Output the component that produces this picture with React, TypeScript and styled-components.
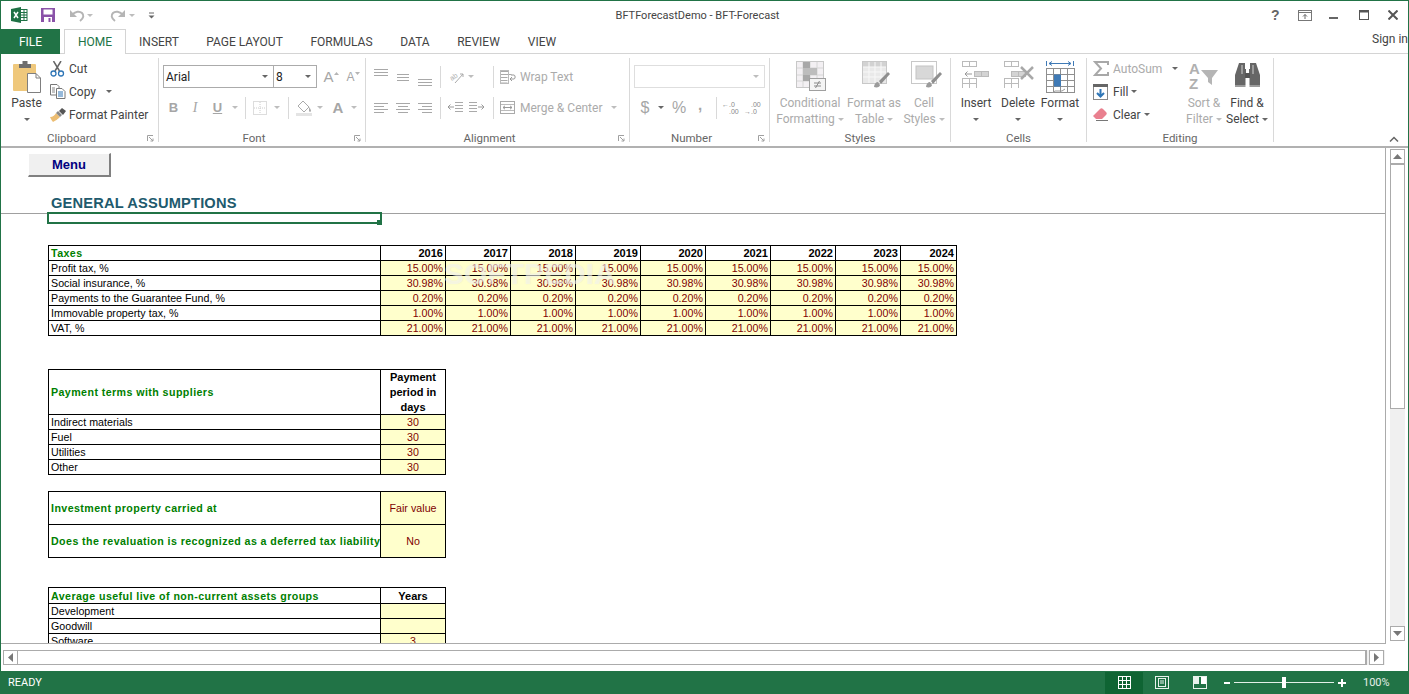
import React from 'react';
import styled, { createGlobalStyle } from 'styled-components';

const GREEN = '#217346';
const UI_FONT = 'Roboto, "Noto Sans", sans-serif';
const CELL_FONT = '"Liberation Sans", Arial, sans-serif';
const TEXT = '#444444';
const OFF = '#ababab';

const Global = createGlobalStyle`
  html, body { margin: 0; padding: 0; background: #fff; }
  * { box-sizing: border-box; }
`;

const Window = styled.div`
  width: 1409px;
  height: 694px;
  display: flex;
  flex-direction: column;
  overflow: hidden;
  background: #fff;
  border: 1px solid ${GREEN};
  border-bottom: 0;
  font-family: ${UI_FONT};
  font-size: 12px;
  color: ${TEXT};
`;

/* title bar */
const TitleBar = styled.div`
  height: 28px;
  flex: none;
  display: flex;
  align-items: center;
  position: relative;
`;
const Quick = styled.div`
  display: flex;
  align-items: center;
  padding-left: 10px;
`;
const QuickSlot = styled.div<{ $w: number }>`
  width: ${(p) => p.$w}px;
  display: flex;
  align-items: center;
  justify-content: center;
`;
const Title = styled.div`
  position: absolute;
  left: 0;
  right: 14px;
  top: 6px;
  text-align: center;
  font-size: 11px;
  line-height: 18px;
  color: #444;
`;
const WinControls = styled.div`
  margin-left: auto;
  display: flex;
  align-items: center;
  padding-right: 0;
`;
const WinSlot = styled.div`
  width: 29.5px;
  display: flex;
  justify-content: center;
  align-items: center;
`;
const Help = styled.span`
  font: bold 14px ${CELL_FONT};
  color: #666;
`;

/* tabs */
const TabRow = styled.div`
  height: 25px;
  flex: none;
  display: flex;
  align-items: stretch;
  border-bottom: 1px solid #d4d4d4;
`;
const FileTab = styled.div`
  width: 59px;
  height: 25px;
  background: ${GREEN};
  color: #fff;
  text-align: center;
  line-height: 26px;
  margin-right: 4px;
`;
const Tab = styled.div<{ $active?: boolean; $w: number }>`
  width: ${(p) => p.$w}px;
  height: ${(p) => (p.$active ? 25 : 24)}px;
  text-align: center;
  line-height: 26px;
  color: ${(p) => (p.$active ? GREEN : TEXT)};
  background: #fff;
  ${(p) => p.$active && 'border: 1px solid #d4d4d4; border-bottom: 0; line-height: 24px;'}
`;
const SignIn = styled.div`
  margin-left: auto;
  line-height: 20px;
  white-space: nowrap;
`;

/* ribbon */
const Ribbon = styled.div`
  height: 94px;
  flex: none;
  display: flex;
  padding-top: 4px;
  border-bottom: 2px solid #b1b1b1;
  position: relative;
`;
const Group = styled.div<{ $w: number }>`
  width: ${(p) => p.$w}px;
  height: 84px;
  flex: none;
  display: flex;
  flex-direction: column;
  border-right: 1px solid #d9d9d9;
  position: relative;
`;
const GroupBody = styled.div<{ $pad?: number }>`
  height: 72px;
  display: flex;
  padding-left: ${(p) => p.$pad ?? 4}px;
`;
const GroupLabel = styled.div<{ $launcher?: boolean }>`
  height: 12px;
  line-height: 16px;
  font-size: 11.5px;
  text-align: center;
  color: #666;
  padding-right: ${(p) => (p.$launcher ? 16 : 0)}px;
`;
const Launcher = styled.div`
  position: absolute;
  right: 4px;
  bottom: 0;
  display: flex;
`;
const Collapse = styled.div`
  position: absolute;
  right: 9px;
  bottom: 4px;
  display: flex;
`;
const Rows = styled.div`
  display: flex;
  flex-direction: column;
  padding-top: 7px;
  gap: 8px;
`;
const Row = styled.div`
  height: 23px;
  display: flex;
  align-items: center;
`;
const Slot = styled.div<{ $w: number; $off?: boolean }>`
  width: ${(p) => p.$w}px;
  flex: none;
  display: flex;
  align-items: center;
  justify-content: center;
  color: ${(p) => (p.$off ? OFF : TEXT)};
`;
const Sep = styled.div<{ $l: number; $r: number }>`
  width: 1px;
  height: 22px;
  flex: none;
  margin: 0 ${(p) => p.$r}px 0 ${(p) => p.$l}px;
  background: #d9d9d9;
`;
const Caret = styled.span<{ $off?: boolean; $ml?: number }>`
  display: inline-block;
  width: 0;
  height: 0;
  flex: none;
  vertical-align: middle;
  margin-left: ${(p) => p.$ml ?? 0}px;
  border-left: 3px solid transparent;
  border-right: 3px solid transparent;
  border-top: 3px solid ${(p) => (p.$off ? '#bdbdbd' : '#666')};
`;
const Combo = styled.div<{ $w: number; $off?: boolean; $flush?: boolean }>`
  width: ${(p) => p.$w}px;
  height: 23px;
  flex: none;
  display: flex;
  align-items: center;
  padding: 0 5px 0 2px;
  border: 1px solid ${(p) => (p.$off ? '#dedede' : '#ababab')};
  ${(p) => p.$flush && 'margin-left: -1px;'}
  color: #222;
  background: #fff;
`;
const ComboText = styled.span`
  flex: 1;
`;
const Large = styled.div<{ $w: number; $off?: boolean }>`
  width: ${(p) => p.$w}px;
  flex: none;
  display: flex;
  flex-direction: column;
  align-items: center;
  color: ${(p) => (p.$off ? OFF : TEXT)};
  line-height: 16px;
  white-space: nowrap;
`;
const LargeIcon = styled.div<{ $shift?: number }>`
  height: 37px;
  padding-top: 3px;
  padding-left: ${(p) => p.$shift ?? 0}px;
  display: flex;
  justify-content: center;
  align-items: flex-start;
`;
const CaretLine = styled.div`
  height: 16px;
  display: flex;
  align-items: center;
  justify-content: center;
`;
const SmallCol = styled.div<{ $w: number; $ml: number }>`
  width: ${(p) => p.$w}px;
  margin-left: ${(p) => p.$ml}px;
  margin-top: -1px;
  flex: none;
  display: flex;
  flex-direction: column;
`;
const Small = styled.div<{ $off?: boolean }>`
  height: 23px;
  display: flex;
  align-items: center;
  white-space: nowrap;
  color: ${(p) => (p.$off ? OFF : TEXT)};
`;
const SmallIcon = styled.div<{ $w?: number }>`
  width: ${(p) => p.$w ?? 19}px;
  flex: none;
  display: flex;
  align-items: center;
`;
const Glyph = styled.span<{ $size: number; $weight?: number; $italic?: boolean; $under?: boolean; $serif?: boolean; $lift?: number }>`
  font-family: ${(p) => (p.$serif ? '"Liberation Serif", serif' : CELL_FONT)};
  font-size: ${(p) => p.$size}px;
  font-weight: ${(p) => p.$weight ?? 400};
  font-style: ${(p) => (p.$italic ? 'italic' : 'normal')};
  text-decoration: ${(p) => (p.$under ? 'underline' : 'none')};
  padding-bottom: ${(p) => p.$lift ?? 0}px;
  color: #a6a6a6;
  line-height: 1;
`;

/* sheet */
const Middle = styled.div`
  height: 496px;
  flex: none;
  display: flex;
`;
const Pane = styled.div`
  width: 1385px;
  flex: none;
  overflow: hidden;
  position: relative;
  border-right: 1px solid #ababab;
  border-bottom: 1px solid #ababab;
  font-family: ${CELL_FONT};
  font-size: 10.67px;
  color: #000;
`;
const MenuButton = styled.div`
  width: 83px;
  height: 24px;
  margin: 5px 0 0 27px;
  background: #f0f0f0;
  border: 1px solid;
  border-color: #fff #808080 #808080 #fff;
  border-width: 1px 2px 2px 1px;
  text-align: center;
  font: bold 13px/21px ${CELL_FONT};
  color: #000080;
`;
const Heading = styled.div`
  height: 37px;
  padding: 18px 0 0 50px;
  border-bottom: 1px solid #a0a0a0;
  font: bold 14.67px/16px ${CELL_FONT};
  letter-spacing: 0.17px;
  color: #215a6d;
  position: relative;
`;
const Selection = styled.div`
  position: absolute;
  left: 46px;
  top: 35px;
  width: 335px;
  height: 12px;
  border: 2px solid ${GREEN};
`;
const Handle = styled.div`
  position: absolute;
  right: -2px;
  bottom: -3px;
  width: 5px;
  height: 5px;
  background: ${GREEN};
`;
const Table = styled.div<{ $cols: string; $top: number }>`
  display: grid;
  width: max-content;
  grid-template-columns: ${(p) => p.$cols};
  margin: ${(p) => p.$top}px 0 0 47px;
  border-top: 1px solid #000;
  border-left: 1px solid #000;
`;
const Cell = styled.div<{
  $h?: number;
  $align?: string;
  $kind?: 'title' | 'head' | 'input' | 'label';
}>`
  height: ${(p) => p.$h ?? 15}px;
  display: flex;
  align-items: center;
  justify-content: ${(p) =>
    p.$align === 'right' ? 'flex-end' : p.$align === 'center' ? 'center' : 'flex-start'};
  text-align: ${(p) => p.$align ?? 'left'};
  padding: 1px 2px 0 2px;
  line-height: 15px;
  white-space: nowrap;
  border-right: 1px solid #000;
  border-bottom: 1px solid #000;
  letter-spacing: ${(p) => (p.$kind === 'title' ? '0.42px' : '0.03px')};
  font-size: ${(p) => (p.$kind === 'head' ? '11px' : 'inherit')};
  background: ${(p) => (p.$kind === 'input' ? '#ffffcc' : '#fff')};
  color: ${(p) =>
    p.$kind === 'input' ? '#800000' : p.$kind === 'title' ? '#008000' : '#000'};
  font-weight: ${(p) => (p.$kind === 'title' || p.$kind === 'head' ? 700 : 400)};
`;
const Wrapped = styled.span`
  white-space: normal;
  width: 62px;
  text-align: center;
`;
const Watermark = styled.div`
  position: absolute;
  left: 443px;
  top: 109px;
  font: bold 30px/34px ${CELL_FONT};
  color: rgba(255, 255, 255, 0.5);
  text-shadow: 0 0 1px rgba(180, 180, 160, 0.25);
  pointer-events: none;
`;

/* scrollbars */
const VScroll = styled.div`
  width: 22px;
  flex: none;
  padding: 1px 3px 3px 4px;
  display: flex;
  flex-direction: column;
`;
const VTrack = styled.div`
  flex: 1;
  display: flex;
  flex-direction: column;
  background: #f0f0f0;
`;
const VThumb = styled.div`
  height: 246px;
  margin-top: -1px;
  background: #fff;
  border: 1px solid #ababab;
  border-top-width: 2px;
`;
const ScrollBtn = styled.div`
  width: 15px;
  height: 15px;
  flex: none;
  display: flex;
  align-items: center;
  justify-content: center;
  background: #fff;
  border: 1px solid #ababab;
`;
const HRow = styled.div`
  height: 27px;
  flex: none;
  padding: 6px 0 0 2px;
`;
const HBar = styled.div`
  width: 1382px;
  height: 15px;
  display: flex;
  background: #f0f0f0;
`;
const HThumb = styled.div`
  width: 1350px;
  height: 15px;
  background: #fff;
  border: 1px solid #ababab;
  border-right-width: 2px;
  margin: 0 2px 0 -1px;
`;

/* status bar */
const Status = styled.div`
  height: 23px;
  flex: none;
  margin: 0 -1px;
  display: flex;
  align-items: center;
  background: ${GREEN};
  color: #fff;
  font-size: 11px;
  padding-left: 8px;
`;
const StatusRight = styled.div`
  margin-left: auto;
  height: 100%;
  display: flex;
  align-items: center;
`;
const ViewBtn = styled.div<{ $active?: boolean }>`
  width: 38px;
  height: 22px;
  display: flex;
  align-items: center;
  justify-content: center;
  background: ${(p) => (p.$active ? '#0f6433' : 'transparent')};
`;
const Zoom = styled.div<{ $w: number }>`
  width: ${(p) => p.$w}px;
  height: 22px;
  display: flex;
  align-items: center;
  justify-content: center;
`;
const Slider = styled.div`
  width: 100px;
  height: 1px;
  background: #e4f0e9;
  position: relative;
`;
const SliderThumb = styled.div`
  position: absolute;
  left: 48px;
  top: -5px;
  width: 4px;
  height: 11px;
  background: #fff;
`;
const Percent = styled.div`
  width: 59px;
  padding: 0 0 1px 13px;
  color: #e6efe9;
`;

/* icons, drawn at their pixel size */
const Svg: React.FC<{ w: number; h: number; children: React.ReactNode }> = ({ w, h, children }) => (
  <svg width={w} height={h} viewBox={`0 0 ${w} ${h}`} fill="none" style={{ display: 'block', flex: 'none' }}>
    {children}
  </svg>
);

const ExcelLogo = () => (
  <Svg w={17} h={16}>
    <rect x="9.5" y="2.5" width="6.5" height="11" fill="#fff" stroke="#1e7145" />
    <path d="M10 5.5h6M10 8h6M10 10.5h6M13 3v10" stroke="#1e7145" />
    <path d="M0 2 10 0v16L0 14z" fill="#1e7145" />
    <path d="M3 5l4 6M7 5l-4 6" stroke="#fff" strokeWidth="1.5" />
  </Svg>
);
const SaveIcon = () => (
  <Svg w={14} h={14}>
    <rect width="14" height="14" fill="#8a52a8" />
    <rect x="2.5" y="1.5" width="9" height="5" fill="#fff" />
    <rect x="3" y="9" width="8" height="5" fill="#fff" />
    <rect x="7.5" y="10" width="2" height="4" fill="#8a52a8" />
  </Svg>
);
const UndoIcon = ({ flip }: { flip?: boolean }) => (
  <Svg w={15} h={13}>
    <g transform={flip ? 'translate(15 0) scale(-1 1)' : undefined}>
      <path d="M2 6c3-4 8-4 10-2s2 5-2 8" stroke="#b5b5b5" strokeWidth="2" />
      <path d="M0 1v7h7z" fill="#b5b5b5" />
    </g>
  </Svg>
);
const QatMore = () => (
  <Svg w={7} h={7}>
    <path d="M1 1h5" stroke="#666" />
    <path d="M.5 3.5h6L3.5 6.5z" fill="#666" />
  </Svg>
);
const RibbonDisplay = () => (
  <Svg w={14} h={11}>
    <rect x=".5" y=".5" width="13" height="10" stroke="#777" />
    <path d="M1 2.5h12" stroke="#777" />
    <path d="M7 9V4.5M5 6.5l2-2 2 2" stroke="#666" />
  </Svg>
);
const MinIcon = () => (
  <Svg w={10} h={10}>
    <rect y="7" width="9" height="2" fill="#666" />
  </Svg>
);
const MaxIcon = () => (
  <Svg w={10} h={10}>
    <rect x=".5" y=".5" width="9" height="9" stroke="#555" />
    <path d="M0 1.5h10" stroke="#555" strokeWidth="2" />
  </Svg>
);
const CloseIcon = () => (
  <Svg w={10} h={10}>
    <path d="M.5.5l9 9M9.5.5l-9 9" stroke="#555" strokeWidth="2" />
  </Svg>
);
const LauncherIcon = () => (
  <Svg w={7} h={7}>
    <path d="M.5 6V.5H6" stroke="#a0a0a0" />
    <path d="M2 2l4 4M6 3.5V6H3.5" stroke="#a0a0a0" />
  </Svg>
);
const PasteIcon = () => (
  <Svg w={30} h={32}>
    <rect x="1" y="3" width="23" height="27" rx="1" fill="#efc87c" />
    <rect x="7" y="3" width="12" height="4" fill="#6e6e6e" />
    <rect x="10.5" y="0" width="5" height="4" fill="#6e6e6e" />
    <path d="M15.5 12.5H24l4.5 4.5v14.500H15.500z" fill="#fff" stroke="#7f7f7f" />
    <path d="M24 12.500V17h4.500" stroke="#7f7f7f" />
  </Svg>
);
const CutIcon = () => (
  <Svg w={15} h={16}>
    <path d="M3.500 0l6 10M11 0L5 10" stroke="#666" strokeWidth="1.500" />
    <circle cx="3.500" cy="12.500" r="2.500" stroke="#2e75b6" strokeWidth="1.300" />
    <circle cx="11" cy="12.500" r="2.500" stroke="#2e75b6" strokeWidth="1.300" />
  </Svg>
);
const CopyIcon = () => (
  <Svg w={16} h={15}>
    <path d="M.5.5H7l2 2V11H.5z" fill="#fff" stroke="#777" />
    <path d="M6.500 4.500H12l3 3v7H6.500z" fill="#fff" stroke="#777" />
    <path d="M2 4h3M2 6h3M2 8h3" stroke="#888" />
    <path d="M8 8h5M8 10h5M8 12h5" stroke="#2e75b6" />
  </Svg>
);
const PainterIcon = () => (
  <Svg w={16} h={14}>
    <path d="M0 9c3 0 5-2 6-4l4 4c-2 2-5 4-7 5-1-1-2-3-3-5z" fill="#ecbd72" />
    <path d="M6 5l2-2 4 4-2 2z" fill="#888" />
    <path d="M9 3l3-3 4 3-3 4z" fill="#555" />
  </Svg>
);
const SizeA = ({ up, size }: { up?: boolean; size: number }) => (
  <Slot $w={22} $off>
    <Glyph $size={size}>A</Glyph>
    <Svg w={5} h={9}>
      <path d={up ? 'M0 3l2.500-3L5 3z' : 'M0 0l2.500 3L5 0z'} fill="#b5b5b5" />
    </Svg>
  </Slot>
);
const BordersIcon = () => (
  <Svg w={14} h={14}>
    <rect x=".5" y=".5" width="13" height="13" stroke="#bbb" strokeDasharray="1 1" />
    <path d="M7 1v12M1 7h12" stroke="#ccc" strokeDasharray="1 1" />
  </Svg>
);
const BucketIcon = () => (
  <Svg w={16} h={16}>
    <path d="M7 1l6 6-5 5-6-6z" fill="#fff" stroke="#aaa" />
    <path d="M13 7c1 1 2 3 2 4s-2 1-2 0z" fill="#aaa" />
    <rect y="13" width="16" height="3" fill="#e4e4e4" />
  </Svg>
);
const Lines = ({ rows, h = 14 }: { rows: [number, number, number][]; h?: number }) => (
  <Svg w={15} h={h}>
    {rows.map(([a, b, y]) => (
      <path key={y} d={`M${a} ${y + 0.5}H${b}`} stroke="#a8a8a8" />
    ))}
  </Svg>
);
const OrientIcon = () => (
  <Svg w={16} h={15}>
    <text x="2" y="10" fontSize="7" fontFamily={CELL_FONT} fill="#aaa" transform="rotate(-35 6 8)">ab</text>
    <path d="M7 14L15 5M15 5h-3M15 5v3" stroke="#aaa" />
  </Svg>
);
const IndentIcon = ({ out }: { out?: boolean }) => (
  <Svg w={16} h={11}>
    <g transform={out ? undefined : 'translate(16 0) scale(-1 1)'}>
      <path d="M8 .5h8M8 3.500h8M8 6.500h8M8 9.500h8" stroke="#aaa" />
      <path d="M7 5H1M3.500 2.500L1 5l2.500 2.500" stroke="#999" />
    </g>
  </Svg>
);
const WrapIcon = () => (
  <Svg w={16} h={14}>
    <path d="M.5 1.500h8M.5 4.500h11M.5 7.500h7M.5 10.500h7M.5 13h7" stroke="#aaa" />
    <rect x=".5" y=".5" width="8" height="13" stroke="#bbb" />
    <path d="M11 5h3c1.500 0 1.500 4 0 4h-4M12 7l-2 2 2 2" stroke="#999" />
  </Svg>
);
const MergeIcon = () => (
  <Svg w={15} h={13}>
    <rect x=".5" y=".5" width="14" height="12" stroke="#aaa" />
    <path d="M1 3.500h13M1 9.500h13" stroke="#bbb" />
    <path d="M3 6.500h9M5 4.800L3 6.500l2 1.700M10 4.800l2 1.700-2 1.700" stroke="#999" />
  </Svg>
);
const DecimalIcon = ({ more }: { more?: boolean }) => (
  <Svg w={18} h={14}>
    <text x={more ? 0 : 7} y="6" fontSize="7" fontFamily={CELL_FONT} fill="#888">{more ? '←.0' : '.00'}</text>
    <text x={more ? 7 : 0} y="13" fontSize="7" fontFamily={CELL_FONT} fill="#888">{more ? '.00' : '→.0'}</text>
  </Svg>
);
const CondIcon = () => (
  <Svg w={31} h={30}>
    <rect x=".5" y=".5" width="27" height="26" fill="#f3f0f3" stroke="#c8c8c8" />
    <path d="M7 1v25M14 1v25M21 1v25M1 7h26M1 14h26M1 20h26" stroke="#d6d6d6" />
    <rect x="7" y="1" width="7" height="6" fill="#a8a8a8" />
    <rect x="7" y="7" width="14" height="7" fill="#bdbdbd" />
    <rect x="7" y="14" width="7" height="6" fill="#a8a8a8" />
    <rect x="13.500" y="17.500" width="16" height="12" fill="#f4f4f4" stroke="#9f9f9f" />
    <path d="M18 22h7M18 25h7M23.500 20l-4 7" stroke="#8a8a8a" />
  </Svg>
);
const Brush = ({ x, y }: { x: number; y: number }) => (
  <g transform={`translate(${x} ${y})`}>
    <path d="M0 15c0-3 2-5 4-5l2 3c0 2-3 3-6 2z" fill="#9b9b9b" />
    <path d="M5 9L14 0l2 2-9 10z" fill="#8f8f8f" />
  </g>
);
const TableStyleIcon = () => (
  <Svg w={30} h={30}>
    <rect x=".5" y=".5" width="24" height="22" fill="#e9e9e9" stroke="#c8c8c8" />
    <rect x="1" y="1" width="23" height="5" fill="#d2d2d2" />
    <path d="M7 1v21M13 1v21M19 1v21M1 6h23M1 11h23M1 16h23" stroke="#f8f8f8" />
    <Brush x={12} y={11} />
  </Svg>
);
const CellStyleIcon = () => (
  <Svg w={34} h={30}>
    <rect x=".5" y=".5" width="25" height="22" fill="#fff" stroke="#c8c8c8" />
    <rect x="5" y="5" width="17" height="13" fill="#d8d8d8" stroke="#c4c4c4" />
    <Brush x={15} y={11} />
  </Svg>
);
const Cells = ({ x, y, c = 2, r = 2, w = 7, h = 5, color = '#bbb', fill = '#fff' }: { x: number; y: number; c?: number; r?: number; w?: number; h?: number; color?: string; fill?: string }) => (
  <g>
    {Array.from({ length: c * r }, (_, i) => (
      <rect
        key={i}
        x={x + 0.5 + (i % c) * w}
        y={y + 0.5 + Math.floor(i / c) * h}
        width={w}
        height={h}
        fill={fill}
        stroke={color}
      />
    ))}
  </g>
);
const InsertIcon = () => (
  <Svg w={28} h={27}>
    <Cells x={0} y={0} r={1} />
    <Cells x={12} y={10} r={1} fill="#d4d4d4" />
    <path d="M10 13H3M5.500 10.500L3 13l2.500 2.500" stroke="#999" />
    <Cells x={0} y={17} />
  </Svg>
);
const DeleteIcon = () => (
  <Svg w={32} h={27}>
    <Cells x={0} y={0} r={1} />
    <Cells x={7} y={10} r={1} fill="#d4d4d4" />
    <path d="M17 6l12 12M29 6L17 18" stroke="#a8a8a8" strokeWidth="2.500" />
    <Cells x={0} y={17} />
  </Svg>
);
const FormatIcon = () => (
  <Svg w={29} h={32}>
    <path d="M.5 0v5M27.500 0v5M3 2.500h22M6 .5l-3 2 3 2M22 .5l3 2-3 2" stroke="#3f7ab6" />
    <Cells x={0} y={7} c={4} r={4} w={7} h={6} color="#8f8f8f" />
    <rect x="8" y="13.500" width="7" height="12" fill="#3f7ab6" />
    <path d="M6 32l3-2h7l3-2" stroke="#999" />
  </Svg>
);
const SigmaIcon = () => (
  <Svg w={16} h={15}>
    <path d="M15 4V1H2l6 6.500L2 14h13v-3" stroke="#a8a8a8" strokeWidth="2" />
  </Svg>
);
const FillIcon = () => (
  <Svg w={15} h={16}>
    <rect x=".5" y=".5" width="14" height="15" fill="#fff" stroke="#888" />
    <rect width="15" height="3" fill="#666" />
    <path d="M7.500 5v7M4 9l3.500 3.500L11 9" stroke="#2e75b6" strokeWidth="2" />
  </Svg>
);
const EraserIcon = () => (
  <Svg w={15} h={13}>
    <path d="M0 8l7-7c1-1 2-1 3 0l3 3c1 1 1 2 0 3l-4 4H3z" fill="#e9808f" />
    <path d="M3 12.500h12" stroke="#777" />
  </Svg>
);
const SortIcon = () => (
  <Svg w={30} h={30}>
    <text x="0" y="13" fontSize="15" fontWeight="700" fontFamily={CELL_FONT} fill="#b0b0b0">A</text>
    <text x="0" y="28" fontSize="15" fontWeight="700" fontFamily={CELL_FONT} fill="#b0b0b0">Z</text>
    <path d="M12 9h17l-6 8v7l-4-3v-4z" fill="#b5b5b5" />
  </Svg>
);
const BinocularsIcon = () => (
  <Svg w={27} h={27}>
    <path d="M4 1h6v6h1v5h-.5v13H0V13z" fill="#666" transform="translate(1 1)" />
    <path d="M22 1h-6v6h-1v5h.5v13H26V13z" fill="#666" transform="translate(0 1)" />
    <rect x="11" y="12" width="5" height="5" fill="#555" />
    <path d="M1 25h11M15 25h11M8 4v9M19 4v9" stroke="#fff" strokeOpacity="0.7" />
  </Svg>
);
const Up = () => (
  <Svg w={9} h={5}>
    <path d="M0 5l4.500-5L9 5z" fill="#777" />
  </Svg>
);
const Down = () => (
  <Svg w={9} h={5}>
    <path d="M0 0l4.500 5L9 0z" fill="#777" />
  </Svg>
);
const Left = () => (
  <Svg w={5} h={9}>
    <path d="M5 0L0 4.500 5 9z" fill="#777" />
  </Svg>
);
const Right = () => (
  <Svg w={5} h={9}>
    <path d="M0 0l5 4.500L0 9z" fill="#777" />
  </Svg>
);
const Chevron = () => (
  <Svg w={10} h={6}>
    <path d="M1 5.500l4-4 4 4" stroke="#666" strokeWidth="1.500" />
  </Svg>
);
const GridView = () => (
  <Svg w={13} h={13}>
    <path d="M.5 0v13M4.500 0v13M8.500 0v13M12.500 0v13M0 .5h13M0 4.500h13M0 8.500h13M0 12.500h13" stroke="#fff" />
  </Svg>
);
const PageView = () => (
  <Svg w={14} h={13}>
    <rect x=".5" y=".5" width="13" height="12" stroke="#e8f2ec" />
    <rect x="3.500" y="2.500" width="7" height="8" stroke="#e8f2ec" />
    <path d="M5 5h4M5 7h4" stroke="#e8f2ec" />
  </Svg>
);
const BreakView = () => (
  <Svg w={14} h={13}>
    <rect x=".5" y=".5" width="13" height="12" stroke="#e8f2ec" />
    <rect x="1" y="1" width="5" height="7" fill="#e8f2ec" />
    <rect x="8" y="1" width="5" height="7" fill="#fff" />
  </Svg>
);
const ZoomOut = () => (
  <Svg w={6} h={2}>
    <rect width="6" height="2" fill="#fff" />
  </Svg>
);
const ZoomIn = () => (
  <Svg w={8} h={8}>
    <path d="M0 4h8M4 0v8" stroke="#fff" strokeWidth="2" />
  </Svg>
);

const Drop = ({ off }: { off?: boolean }) => <Caret $off={off} />;
const LargeDrop = ({ off }: { off?: boolean }) => (
  <CaretLine>
    <Caret $off={off} />
  </CaretLine>
);

const tabs: [string, number][] = [
  ['INSERT', 66],
  ['PAGE LAYOUT', 105],
  ['FORMULAS', 89],
  ['DATA', 58],
  ['REVIEW', 69],
  ['VIEW', 58],
];

const years = [2016, 2017, 2018, 2019, 2020, 2021, 2022, 2023, 2024];
const taxes: [string, string][] = [
  ['Profit tax, %', '15.00%'],
  ['Social insurance, %', '30.98%'],
  ['Payments to the Guarantee Fund, %', '0.20%'],
  ['Immovable property tax, %', '1.00%'],
  ['VAT, %', '21.00%'],
];
const suppliers = ['Indirect materials', 'Fuel', 'Utilities', 'Other'];

const GroupFoot = ({ label, launcher }: { label: string; launcher?: boolean }) => (
  <>
    <GroupLabel $launcher={launcher}>{label}</GroupLabel>
    {launcher && (
      <Launcher>
        <LauncherIcon />
      </Launcher>
    )}
  </>
);

const App: React.FC = () => (
  <Window>
    <Global />
    <TitleBar>
      <Quick>
        <ExcelLogo />
        <QuickSlot $w={40}><SaveIcon /></QuickSlot>
        <QuickSlot $w={19}><UndoIcon /></QuickSlot>
        <QuickSlot $w={6}><Caret $off /></QuickSlot>
        <QuickSlot $w={17} />
        <QuickSlot $w={15}><UndoIcon flip /></QuickSlot>
        <QuickSlot $w={14}><Caret $off /></QuickSlot>
        <QuickSlot $w={24}><QatMore /></QuickSlot>
      </Quick>
      <Title>BFTForecastDemo - BFT-Forecast</Title>
      <WinControls>
        <WinSlot><Help>?</Help></WinSlot>
        <WinSlot><RibbonDisplay /></WinSlot>
        <WinSlot><MinIcon /></WinSlot>
        <WinSlot><MaxIcon /></WinSlot>
        <WinSlot><CloseIcon /></WinSlot>
      </WinControls>
    </TitleBar>

    <TabRow>
      <FileTab>FILE</FileTab>
      <Tab $active $w={62}>HOME</Tab>
      {tabs.map(([name, w]) => (
        <Tab key={name} $w={w}>{name}</Tab>
      ))}
      <SignIn>Sign in</SignIn>
    </TabRow>

    <Ribbon>
      <Group $w={158}>
        <GroupBody $pad={7}>
          <Large $w={37}>
            <LargeIcon><PasteIcon /></LargeIcon>
            Paste
            <LargeDrop />
          </Large>
          <SmallCol $w={105} $ml={5}>
            <Small><SmallIcon><CutIcon /></SmallIcon>Cut</Small>
            <Small><SmallIcon><CopyIcon /></SmallIcon>Copy<Caret $ml={10} /></Small>
            <Small><SmallIcon><PainterIcon /></SmallIcon>Format Painter</Small>
          </SmallCol>
        </GroupBody>
        <GroupFoot label="Clipboard" launcher />
      </Group>

      <Group $w={207}>
        <GroupBody>
          <Rows>
            <Row>
              <Combo $w={111}><ComboText>Arial</ComboText><Drop /></Combo>
              <Combo $w={44} $flush><ComboText>8</ComboText><Drop /></Combo>
              <Slot $w={3} />
              <SizeA up size={15} />
              <SizeA size={12} />
            </Row>
            <Row>
              <Slot $w={21}><Glyph $size={13} $weight={700}>B</Glyph></Slot>
              <Slot $w={22}><Glyph $size={14} $italic $serif>I</Glyph></Slot>
              <Slot $w={23}><Glyph $size={13} $weight={700} $under>U</Glyph></Slot>
              <Slot $w={11}><Drop off /></Slot>
              <Sep $l={5} $r={5} />
              <Slot $w={18}><BordersIcon /></Slot>
              <Slot $w={16}><Drop off /></Slot>
              <Sep $l={3} $r={5} />
              <Slot $w={20}><BucketIcon /></Slot>
              <Slot $w={12}><Drop off /></Slot>
              <Slot $w={24}><Glyph $size={15} $weight={700}>A</Glyph></Slot>
              <Slot $w={8}><Drop off /></Slot>
            </Row>
          </Rows>
        </GroupBody>
        <GroupFoot label="Font" launcher />
      </Group>

      <Group $w={264}>
        <GroupBody>
          <Rows>
            <Row>
              <Slot $w={22}><Lines h={20} rows={[[0, 14, 2], [0, 14, 5], [0, 14, 8]]} /></Slot>
              <Slot $w={22}><Lines h={20} rows={[[1, 13, 7], [1, 13, 10], [1, 13, 13]]} /></Slot>
              <Slot $w={22}><Lines h={20} rows={[[0, 14, 12], [0, 14, 15], [0, 14, 18]]} /></Slot>
              <Sep $l={4} $r={4} />
              <Slot $w={22}><OrientIcon /></Slot>
              <Slot $w={8}><Drop off /></Slot>
              <Sep $l={18} $r={6} />
              <Small $off><SmallIcon $w={20}><WrapIcon /></SmallIcon>Wrap Text</Small>
            </Row>
            <Row>
              <Slot $w={22}><Lines rows={[[0, 14, 2], [0, 10, 5], [0, 14, 8], [0, 10, 11]]} /></Slot>
              <Slot $w={22}><Lines rows={[[0, 14, 2], [2, 12, 5], [0, 14, 8], [2, 12, 11]]} /></Slot>
              <Slot $w={22}><Lines rows={[[0, 14, 2], [4, 14, 5], [0, 14, 8], [4, 14, 11]]} /></Slot>
              <Sep $l={4} $r={4} />
              <Slot $w={20}><IndentIcon out /></Slot>
              <Slot $w={24}><IndentIcon /></Slot>
              <Sep $l={4} $r={6} />
              <Small $off><SmallIcon $w={20}><MergeIcon /></SmallIcon>Merge &amp; Center<Caret $off $ml={9} /></Small>
            </Row>
          </Rows>
        </GroupBody>
        <GroupFoot label="Alignment" launcher />
      </Group>

      <Group $w={140}>
        <GroupBody>
          <Rows>
            <Row>
              <Combo $w={131} $off><ComboText /><Drop off /></Combo>
            </Row>
            <Row>
              <Slot $w={22}><Glyph $size={16}>$</Glyph></Slot>
              <Slot $w={10}><Drop /></Slot>
              <Slot $w={26}><Glyph $size={16}>%</Glyph></Slot>
              <Slot $w={16}><Glyph $size={15} $weight={700} $lift={7}>,</Glyph></Slot>
              <Sep $l={8} $r={4} />
              <Slot $w={20}><DecimalIcon more /></Slot>
              <Slot $w={24}><DecimalIcon /></Slot>
            </Row>
          </Rows>
        </GroupBody>
        <GroupFoot label="Number" launcher />
      </Group>

      <Group $w={181}>
        <GroupBody>
          <Large $w={72} $off>
            <LargeIcon $shift={3}><CondIcon /></LargeIcon>
            Conditional
            <div>Formatting <Caret $off /></div>
          </Large>
          <Large $w={56} $off>
            <LargeIcon $shift={6}><TableStyleIcon /></LargeIcon>
            Format as
            <div>Table <Caret $off /></div>
          </Large>
          <Large $w={44} $off>
            <LargeIcon $shift={8}><CellStyleIcon /></LargeIcon>
            Cell
            <div>Styles <Caret $off /></div>
          </Large>
        </GroupBody>
        <GroupFoot label="Styles" />
      </Group>

      <Group $w={136}>
        <GroupBody>
          <Large $w={42}>
            <LargeIcon><InsertIcon /></LargeIcon>
            Insert
            <LargeDrop />
          </Large>
          <Large $w={42}>
            <LargeIcon $shift={3}><DeleteIcon /></LargeIcon>
            Delete
            <LargeDrop />
          </Large>
          <Large $w={42}>
            <LargeIcon><FormatIcon /></LargeIcon>
            Format
            <LargeDrop />
          </Large>
        </GroupBody>
        <GroupFoot label="Cells" />
      </Group>

      <Group $w={187}>
        <GroupBody $pad={6}>
          <SmallCol $w={93} $ml={0}>
            <Small $off><SmallIcon $w={20}><SigmaIcon /></SmallIcon>AutoSum<Caret $ml={10} /></Small>
            <Small><SmallIcon $w={20}><FillIcon /></SmallIcon>Fill<Caret $ml={3} /></Small>
            <Small><SmallIcon $w={20}><EraserIcon /></SmallIcon>Clear<Caret $ml={3} /></Small>
          </SmallCol>
          <Large $w={36} $off>
            <LargeIcon><SortIcon /></LargeIcon>
            Sort &amp;
            <div>Filter <Caret $off /></div>
          </Large>
          <Large $w={50}>
            <LargeIcon><BinocularsIcon /></LargeIcon>
            Find &amp;
            <div>Select <Caret /></div>
          </Large>
        </GroupBody>
        <GroupFoot label="Editing" />
      </Group>

      <Collapse><Chevron /></Collapse>
    </Ribbon>

    <Middle>
      <Pane>
        <MenuButton>Menu</MenuButton>
        <Heading>
          GENERAL ASSUMPTIONS
          <Selection><Handle /></Selection>
        </Heading>

        <Table $cols={`332px repeat(8, 65px) 56px`} $top={31}>
          <Cell $kind="title">Taxes</Cell>
          {years.map((y) => (
            <Cell key={y} $kind="head" $align="right">{y}</Cell>
          ))}
          {taxes.map(([name, value]) => (
            <React.Fragment key={name}>
              <Cell>{name}</Cell>
              {years.map((y) => (
                <Cell key={y} $kind="input" $align="right">{value}</Cell>
              ))}
            </React.Fragment>
          ))}
        </Table>

        <Table $cols="332px 65px" $top={33}>
          <Cell $kind="title" $h={45}>Payment terms with suppliers</Cell>
          <Cell $kind="head" $h={45} $align="center"><Wrapped>Payment period in days</Wrapped></Cell>
          {suppliers.map((name) => (
            <React.Fragment key={name}>
              <Cell>{name}</Cell>
              <Cell $kind="input" $align="center">30</Cell>
            </React.Fragment>
          ))}
        </Table>

        <Table $cols="332px 65px" $top={16}>
          <Cell $kind="title" $h={33}>Investment property carried at</Cell>
          <Cell $kind="input" $h={33} $align="center">Fair value</Cell>
          <Cell $kind="title" $h={33}>Does the revaluation is recognized as a deferred tax liability</Cell>
          <Cell $kind="input" $h={33} $align="center">No</Cell>
        </Table>

        <Table $cols="332px 65px" $top={29}>
          <Cell $kind="title" $h={16}>Average useful live of non-current assets groups</Cell>
          <Cell $kind="head" $h={16} $align="center">Years</Cell>
          <Cell>Development</Cell>
          <Cell $kind="input" />
          <Cell>Goodwill</Cell>
          <Cell $kind="input" />
          <Cell>Software</Cell>
          <Cell $kind="input" $align="center">3</Cell>
        </Table>

        <Watermark>SOFTPEDIA</Watermark>
      </Pane>
      <VScroll>
        <ScrollBtn><Up /></ScrollBtn>
        <VTrack>
          <VThumb />
        </VTrack>
        <ScrollBtn><Down /></ScrollBtn>
      </VScroll>
    </Middle>

    <HRow>
      <HBar>
        <ScrollBtn><Left /></ScrollBtn>
        <HThumb />
        <ScrollBtn><Right /></ScrollBtn>
      </HBar>
    </HRow>

    <Status>
      READY
      <StatusRight>
        <ViewBtn $active><GridView /></ViewBtn>
        <ViewBtn><PageView /></ViewBtn>
        <ViewBtn><BreakView /></ViewBtn>
        <Zoom $w={15}><ZoomOut /></Zoom>
        <Slider><SliderThumb /></Slider>
        <Zoom $w={16}><ZoomIn /></Zoom>
        <Percent>100%</Percent>
      </StatusRight>
    </Status>
  </Window>
);

export default App;
